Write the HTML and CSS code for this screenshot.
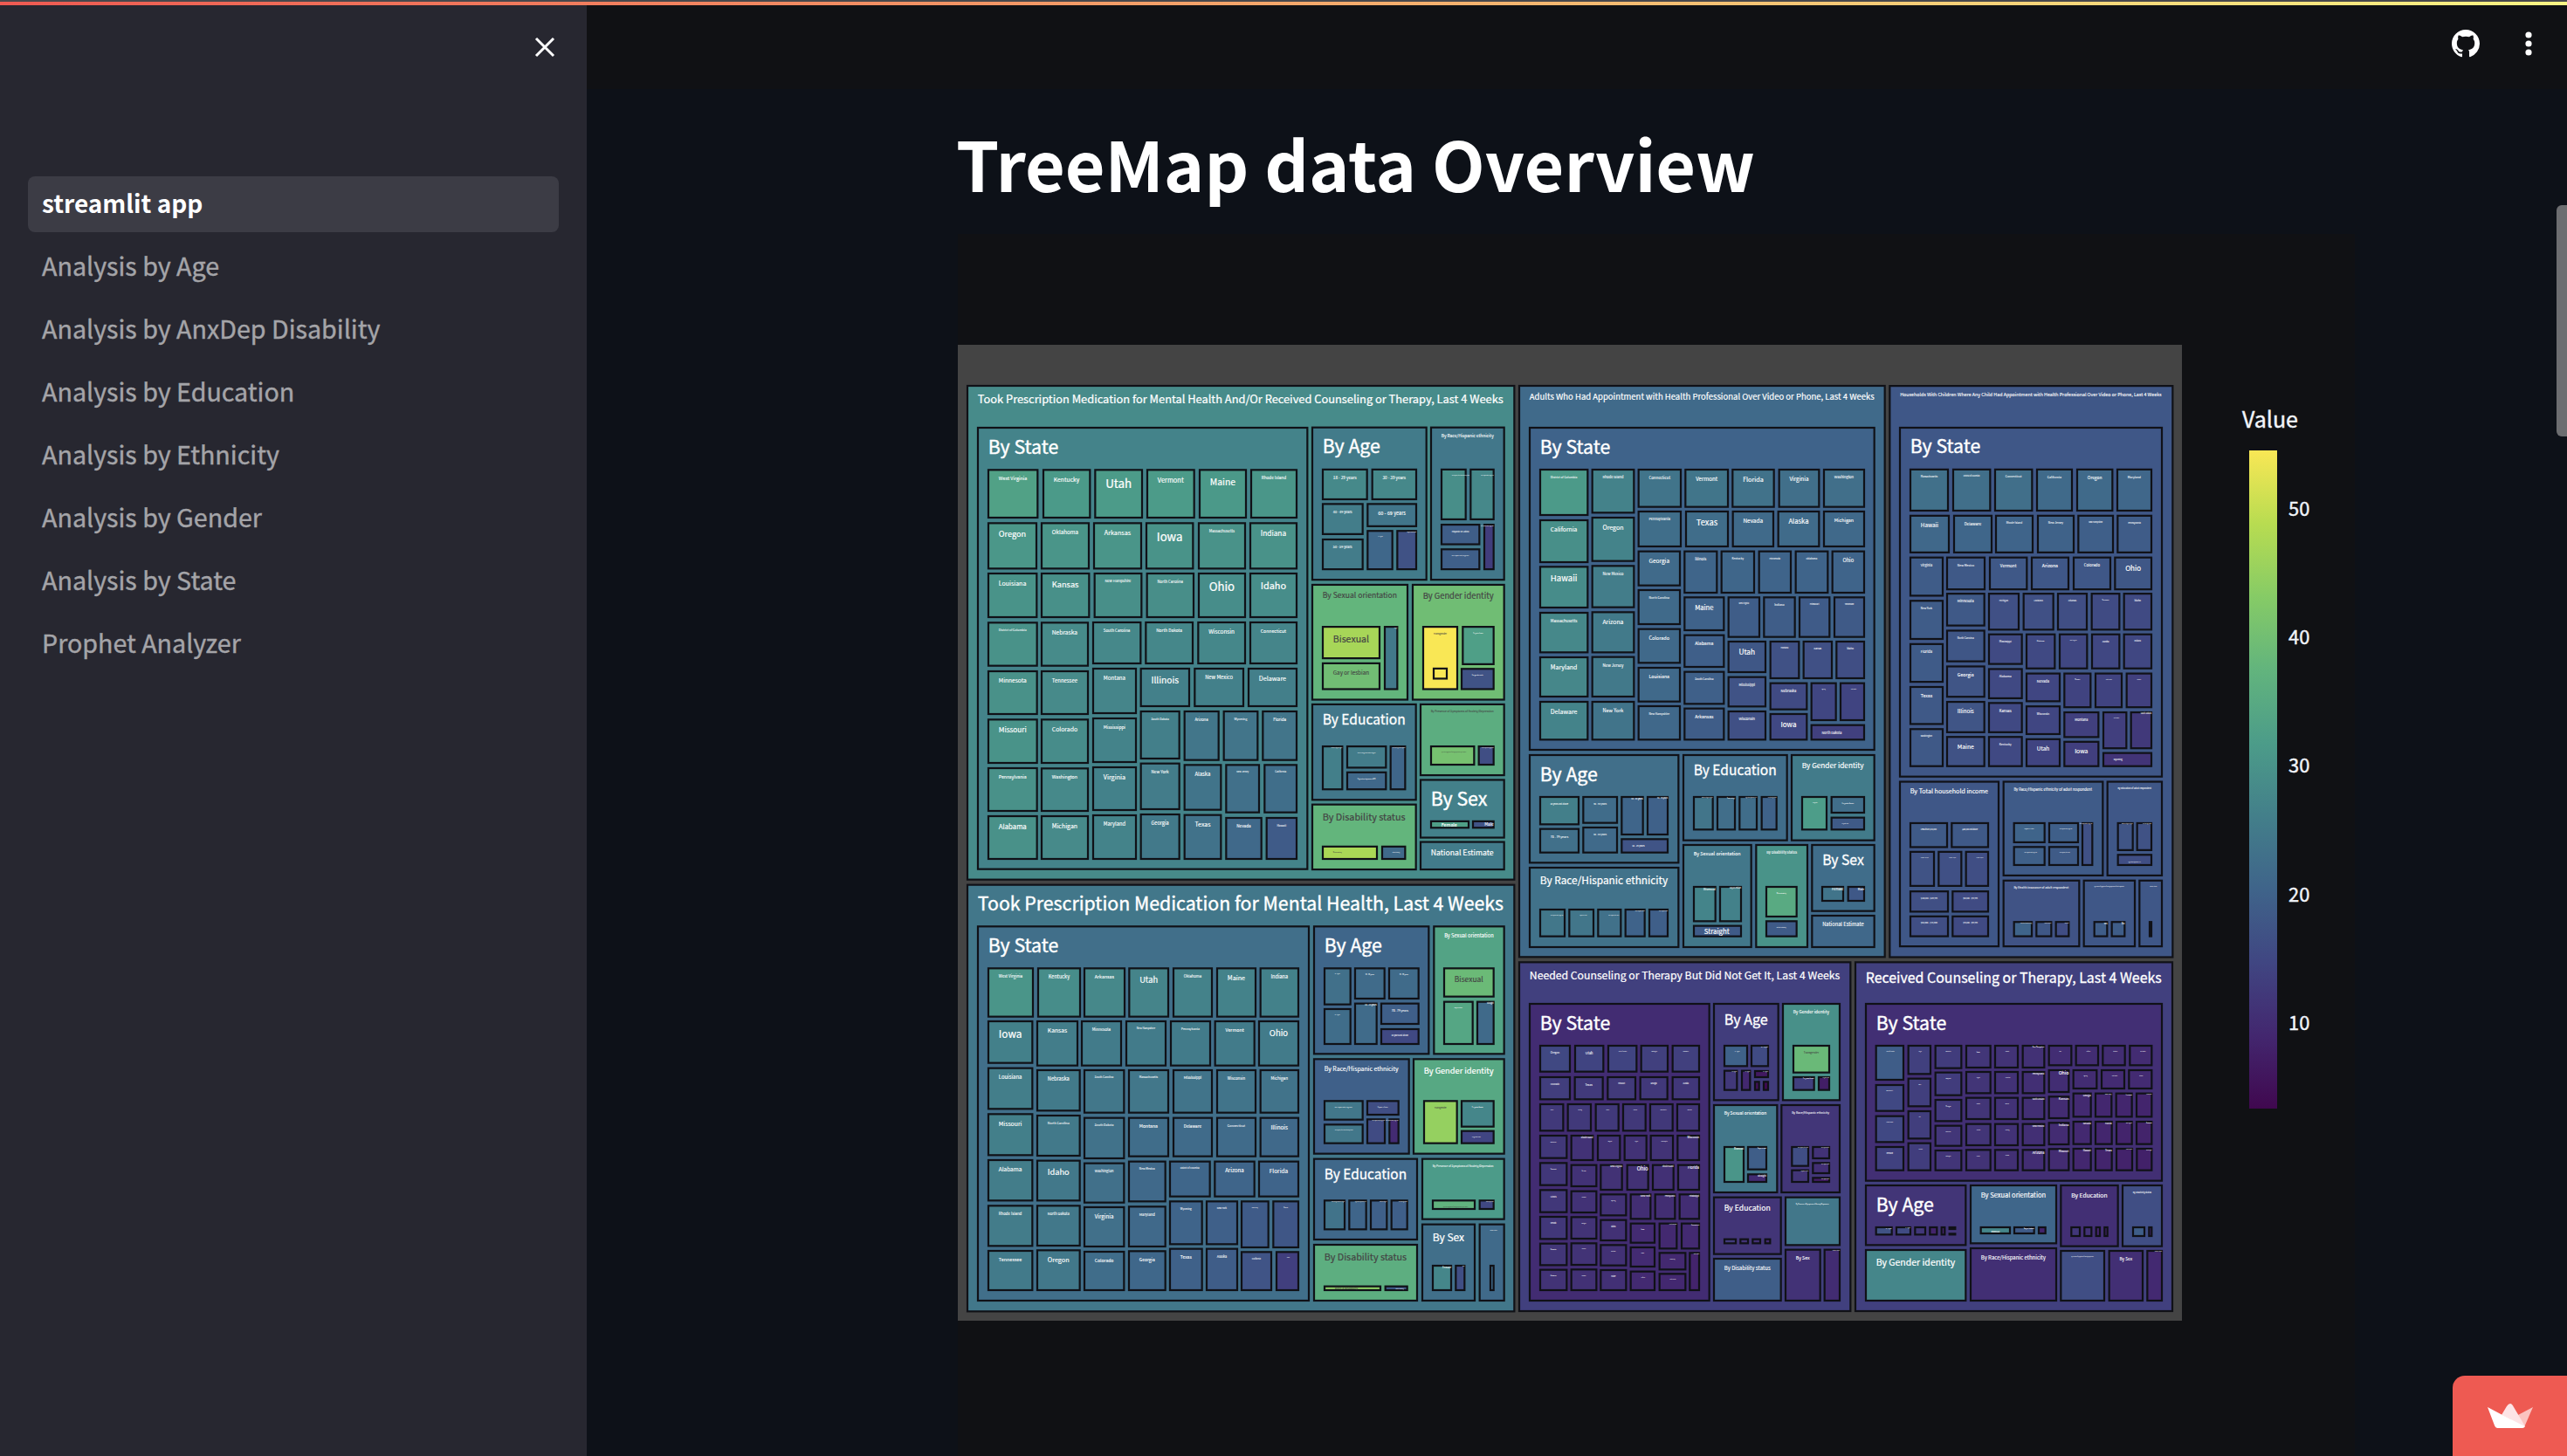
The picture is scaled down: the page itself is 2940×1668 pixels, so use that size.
FILE: index.html
```html
<!DOCTYPE html>
<html lang="en">
<head>
<meta charset="utf-8">
<title>streamlit app</title>
<link rel="stylesheet" href="styles.css">
</head>
<body>
<div class="decoration"></div>
<div class="app">
  <aside class="sidebar">
    <button class="close" aria-label="Close sidebar">
      <svg viewBox="0 0 24 24" width="24" height="24"><path d="M2 2 22 22M22 2 2 22" fill="none" stroke="#fff" stroke-width="3"/></svg>
    </button>
    <nav class="nav">
      <a class="nav-item active">streamlit app</a>
      <a class="nav-item">Analysis by Age</a>
      <a class="nav-item">Analysis by AnxDep Disability</a>
      <a class="nav-item">Analysis by Education</a>
      <a class="nav-item">Analysis by Ethnicity</a>
      <a class="nav-item">Analysis by Gender</a>
      <a class="nav-item">Analysis by State</a>
      <a class="nav-item">Prophet Analyzer</a>
    </nav>
  </aside>
  <main class="main">
    <header class="toolbar">
      <svg class="github" viewBox="0 0 16 16" width="32" height="32"><path fill="#fff" d="M8 0C3.58 0 0 3.58 0 8c0 3.54 2.29 6.53 5.47 7.59.4.07.55-.17.55-.38 0-.19-.01-.82-.01-1.49-2.01.37-2.53-.49-2.69-.94-.09-.23-.48-.94-.82-1.13-.28-.15-.68-.52-.01-.53.63-.01 1.08.58 1.23.82.72 1.21 1.87.87 2.33.66.07-.52.28-.87.51-1.07-1.78-.2-3.64-.89-3.64-3.95 0-.87.31-1.59.82-2.15-.08-.2-.36-1.02.08-2.12 0 0 .67-.21 2.2.82.64-.18 1.32-.27 2-.27s1.36.09 2 .27c1.53-1.04 2.2-.82 2.2-.82.44 1.1.16 1.92.08 2.12.51.56.82 1.27.82 2.15 0 3.07-1.87 3.75-3.65 3.95.29.25.54.73.54 1.48 0 1.07-.01 1.93-.01 2.2 0 .21.15.46.55.38A8.01 8.01 0 0 0 16 8c0-4.42-3.58-8-8-8z"/></svg>
      <svg class="kebab" viewBox="0 0 8 28" width="8" height="28"><g fill="#fff"><circle cx="4" cy="4" r="3.6"/><circle cx="4" cy="14" r="3.6"/><circle cx="4" cy="24" r="3.6"/></g></svg>
    </header>
    <section class="block">
      <h1 class="title">TreeMap data Overview</h1>
      <svg class="chart" id="chart" viewBox="1097 268 1600 1400" width="1600" height="1400"></svg>
    </section>
  </main>
</div>
<div class="scrollbar"></div>
<a class="badge" aria-label="Hosted with Streamlit">
  <svg viewBox="0 0 52 28" width="52" height="28">
    <path fill="#fbc3c0" d="M35 13 52 4 42 27 26 19Z"/>
    <path fill="#fde4e6" d="M26 0 Q28 0 30 4L43 26 16 13 22 3Q24 0 26 0Z"/>
    <path fill="#fff" d="M0 4 17 13 43 26 Q42 28 40 28H11Q9 28 8 25Z"/>
  </svg>
</a>
<script src="treemap.js"></script>
</body>
</html>
```
FILE: styles.css
```css
* { box-sizing: border-box; }
body {
  margin: 0;
  height: 1668px;
  overflow: hidden;
  background: #0d1118;
  color: #fafafa;
  font-family: "Noto Sans CJK SC", "Noto Sans", sans-serif;
}
.decoration {
  position: absolute;
  inset: 0 0 auto 0;
  height: 6px;
  z-index: 5;
  border-top: 2px solid #48484c;
  background: linear-gradient(90deg, #ee5a52, #fbf584) padding-box;
}
.app { display: flex; height: 1668px; }
.sidebar {
  width: 672px;
  background: #272730;
  padding: 0 32px;
  display: flex;
  flex-direction: column;
}
.close {
  align-self: flex-end;
  margin: 42px 4px 136px 0;
  width: 24px;
  height: 24px;
  padding: 0;
  border: 0;
  background: none;
}
.close svg { display: block; }
.nav { display: flex; flex-direction: column; gap: 8px; }
.nav-item {
  height: 64px;
  padding: 0 16px;
  line-height: 60px;
  font-size: 28.65px;
  color: #a4a4a8;
  -webkit-text-stroke: 0.4px #a4a4a8;
  border-radius: 8px;
  white-space: nowrap;
}
.nav-item.active {
  background: #3c3c45;
  color: #fff;
  font-size: 28px;
  font-weight: 700;
  -webkit-text-stroke: 0;
}
.main { flex: 1; overflow: hidden; }
.toolbar {
  height: 102px;
  padding: 0 40px 2px 0;
  display: flex;
  justify-content: flex-end;
  align-items: center;
  gap: 52px;
  background: #101114;
}
.block { padding-left: 425px; }
.title {
  margin: 0 0 0 -2px;
  height: 166px;
  line-height: 168px;
  font-size: 78.9px;
  font-weight: 700;
  color: #fff;
  white-space: nowrap;
}
.chart { display: block; background: #101114; }
.scrollbar {
  position: absolute;
  right: 0;
  top: 235px;
  width: 12px;
  height: 265px;
  border-radius: 6px 0 0 6px;
  background: #6c6d70;
}
.badge {
  position: absolute;
  right: 0;
  bottom: 0;
  width: 131px;
  height: 92px;
  border-radius: 14px 0 0 0;
  background: #ee5a52;
  display: flex;
  align-items: center;
  justify-content: center;
}
```
FILE: treemap.js
```js
// Layout of the treemap, one directive per line:
//   o originX originY scaleX scaleY      local coordinate system
//   p x0 y0 x1 y1 t label                branch, t = position on the colour scale
//   k value                              value of the next leaf; the others follow by area
//   r y0 y1: x0 x1 label; ...            a row of leaves
//   c x0 x1: y0 y1 label; ...            a column of leaves
//   l x0 y0 x1 y1 t label                single leaf with its own colour
const layout = `
o 1090 390 3 3
p 51 153 1936 1856 .49 Took Prescription Medication for Mental Health And/Or Received Counseling or Therapy, Last 4 Weeks
p 87 297 1225 1820 .46 By State
k 33
r 442 612: 123 298 West Virginia; 312 478 Kentucky; 490 657 Utah; 669 836 Vermont; 849 1014 Maine; 1026 1188 Rhode Island
r 625 787: 123 294 Oregon; 306 474 Oklahoma; 486 654 Arkansas; 666 832 Iowa; 846 1011 Massachusetts; 1023 1188 Indiana
r 798 954: 123 295 Louisiana; 306 475 Kansas; 488 655 New Hampshire; 668 834 North Carolina; 846 1011 Ohio; 1023 1188 Idaho
c 123 296: 967 1121 District of Columbia; 1134 1287 Minnesota; 1300 1455 Missouri; 1467 1620 Pennsylvania; 1632 1785 Alabama
c 306 471: 967 1121 Nebraska; 1134 1287 Tennessee; 1300 1455 Colorado; 1468 1620 Washington; 1632 1785 Michigan
r 966 1113: 483 652 South Carolina; 664 831 North Dakota; 844 1011 Wisconsin; 1023 1188 Connecticut
c 483 636: 1125 1284 Montana; 1296 1452 Mississippi; 1464 1617 Virginia; 1629 1785 Maryland
r 1125 1260: 647 819 Illinois; 832 1005 New Mexico; 1017 1188 Delaware
c 647 785: 1272 1440 South Dakota; 1451 1614 New York; 1626 1785 Georgia
r 1272 1445: 797 920 Arizona; 932 1054 Wyoming; 1066 1188 Florida
c 797 928: 1456 1616 Alaska; 1628 1785 Texas
r 1456 1625: 940 1059 New Jersey; 1072 1188 California
r 1638 1785: 940 1067 Nevada; 1079 1188 Hawaii
o 1490 430 3 2.6576
p 36 156 434 625 .43 By Age
k 28
r 284 380: 72 230 18 - 29 years; 242 399 30 - 39 years
c 72 215: 389 486 40 - 49 years; 497 593 50 - 59 years
r 389 462: 226 399 60 - 69 years
r 471 593: 226 317 70 - 79 years; 328 399 80 years and above
p 444 156 701 625 .41 By Race/Hispanic ethnicity
k 29
r 284 441: 480 569 Non-Hispanic, other races and multiple races; 580 665 Non-Hispanic White, single race
c 480 616: 452 517 Hispanic or Latino; 527 593 Non-Hispanic Black, single race
r 452 593: 627 665 Non-Hispanic Asian, single race
p 36 635 369 990 .67 By Sexual orientation
k 47
r 763 864: 72 273 Bisexual
r 874 958: 72 273 Gay or lesbian
r 763 958: 285 334 Straight
p 381 635 701 990 .71 By Gender identity
l 417 763 540 958 1 Transgender
l 553 763 665 882 .57 Cis-gender female
l 549 891 665 958 .27 Cis-gender male
l 453 890 504 926 1 Cis-gender
p 36 999 398 1295 .41 By Education
k 26
r 1127 1263: 72 145 Bachelor's degree or higher; 305 361 Less than a high school diploma
c 156 295: 1127 1197 Some college/Associate's degree; 1206 1263 High school diploma or GED
p 408 999 701 1220 .635 By Presence of Symptoms of Anxiety/Depression
l 444 1127 598 1188 .73 Experienced symptoms of anxiety/depression in past 4 weeks
l 608 1127 665 1188 .25 Did not experience symptoms
p 36 1304 398 1507 .67 By Disability status
l 72 1432 264 1475 .86 With disability
l 276 1432 361 1475 .36 Without disability
p 408 1229 701 1410 .45 By Sex
l 444 1355 579 1380 .57 Female
l 588 1355 665 1380 .27 Male
p 408 1418 701 1507 .43 National Estimate

o 1090 1005 3 3
p 51 23 1936 1495 .41 Took Prescription Medication for Mental Health, Last 4 Weeks
p 87 166 1230 1458 .38 By State
k 30.5
r 310 482: 123 282 West Virginia; 294 444 Kentucky; 453 597 Arkansas; 607 747 Utah; 759 897 Oklahoma; 909 1047 Maine; 1058 1194 Indiana
c 123 280: 492 641 Iowa; 653 799 Louisiana; 811 958 Missouri; 969 1114 Alabama; 1126 1270 Rhode Island; 1281 1422 Tennessee
r 492 650: 291 435 Kansas; 444 585 Minnesota; 597 738 New Hampshire; 750 891 Pennsylvania; 902 1043 Vermont; 1053 1194 Ohio
c 291 443: 660 805 Nebraska; 816 960 North Carolina; 971 1114 Idaho; 1126 1269 North Dakota; 1279 1422 Oregon
r 660 812: 453 595 South Carolina; 606 747 Massachusetts; 759 897 Mississippi; 909 1047 Wisconsin; 1058 1194 Michigan
c 453 595: 824 969 South Dakota; 980 1121 Washington; 1131 1272 Virginia; 1284 1422 Colorado
r 824 962: 606 747 Montana; 759 897 Delaware; 909 1047 Connecticut; 1058 1194 Illinois
c 606 737: 974 1117 New Mexico; 1129 1272 Maryland; 1282 1422 Georgia
r 974 1100: 747 890 District of Columbia; 901 1043 Arizona; 1053 1194 Florida
c 747 863: 1111 1264 Wyoming; 1274 1422 Texas
c 873 984: 1111 1264 New York; 1274 1422 Alaska
r 1111 1275: 993 1091 New Jersey; 1102 1194 Nevada
r 1285 1422: 993 1101 California; 1113 1194 Hawaii
o 1490 1005 3 3
p 42 166 442 610 .34 By Age
k 23
c 78 173: 310 440 50 - 59 years; 450 576 60 - 69 years
r 310 420: 183 290 40 - 49 years; 300 407 30 - 39 years
r 431 576: 183 263 18 - 29 years
c 273 407: 431 507 70 - 79 years; 519 576 80 years and above
p 454 166 701 610 .59 By Sexual orientation
k 39
r 310 413: 489 665 Bisexual
r 425 576: 489 593 Gay or lesbian; 603 665 Straight
p 42 622 374 953 .32 By Race/Hispanic ethnicity
k 24.5
c 78 215: 766 836 Non-Hispanic White, single race; 847 917 Non-Hispanic, other races and multiple races
r 766 819: 225 338 Hispanic or Latino
r 829 917: 225 291 Non-Hispanic Black, single race; 301 338 Non-Hispanic Asian, single race
p 384 622 701 953 .61 By Gender identity
l 420 766 539 917 .81 Transgender
l 549 766 665 860 .47 Cis-gender female
l 549 869 665 917 .22 Cis-gender male
p 42 965 402 1248 .35 By Education
k 23.5
r 1108 1213: 78 153 Some college/Associate's degree; 163 227 High school diploma or GED; 237 298 Bachelor's degree; 308 368 Less than high school
p 414 965 701 1178 .55 By Presence of Symptoms of Anxiety/Depression
l 450 1108 600 1143 .66 Experienced symptoms of anxiety/depression in past 4 weeks
l 611 1108 665 1143 .23 Did not experience
p 42 1260 402 1458 .64 By Disability status
l 78 1403 276 1422 .79 With a disability
l 287 1403 368 1422 .3 Without a disability
p 414 1190 600 1458 .38 By Sex
l 450 1332 519 1422 .47 Female
l 529 1332 565 1422 .25 Male
p 611 1190 701 1458 .36 National Estimate
l 648 1332 665 1422 .36 

o 1735 430 3 3
p 12 33 1274 2002 .36 Adults Who Had Appointment with Health Professional Over Video or Phone, Last 4 Weeks
p 48 177 1238 1290 .33 By State
k 31.5
c 84 253: 321 483 District of Columbia; 495 645 California; 655 801 Hawaii; 813 955 Massachusetts; 966 1107 Maryland; 1119 1255 Delaware
c 263 412: 321 475 Rhode Island; 486 641 Oregon; 652 800 New Mexico; 811 955 Arizona; 965 1107 New Jersey; 1119 1255 New York
r 321 455: 422 573 Connecticut; 583 735 Vermont; 745 893 Florida; 905 1048 Virginia; 1059 1203 Washington
r 465 591: 422 573 Pennsylvania; 585 735 Texas; 746 891 Nevada; 902 1048 Alaska; 1059 1203 Michigan
c 422 570: 602 725 Georgia; 735 858 North Carolina; 869 991 Colorado; 1002 1124 Louisiana; 1134 1255 New Hampshire
r 602 750: 580 697 Illinois; 707 825 Kentucky; 836 951 Minnesota; 962 1078 Oklahoma; 1088 1203 Ohio
c 580 721: 760 879 Maine; 890 1005 Alabama; 1016 1132 South Carolina; 1142 1255 Arkansas
r 760 902: 731 843 West Virginia; 853 965 Indiana; 975 1084 Missouri; 1095 1203 Tennessee
c 731 864: 912 1023 Utah; 1034 1141 Mississippi; 1152 1255 Wisconsin
r 912 1044: 875 979 Montana; 989 1092 Kansas; 1102 1203 Idaho
c 875 1006: 1055 1151 Nebraska; 1161 1255 Iowa
r 1055 1188: 1016 1106 Wyoming; 1116 1203 South Dakota
r 1199 1255: 1016 1203 North Dakota
o 1735 850 3 3
p 48 42 565 418 .38 By Age
k 26
c 84 222: 186 286 80 years and above; 296 383 70 - 79 years
c 232 354: 186 281 60 - 69 years; 291 383 50 - 59 years
r 186 321: 364 443 40 - 49 years; 453 528 30 - 39 years
r 331 383: 364 528 18 - 29 years
p 48 429 565 708 .39 By Race/Hispanic ethnicity
k 24.5
r 573 671: 84 174 Non-Hispanic Black, single race; 184 273 Hispanic or Latino; 283 367 Non-Hispanic, other races; 377 449 Non-Hispanic White; 459 528 Non-Hispanic Asian
p 576 42 938 341 .37 By Education
k 24
r 186 304: 612 683 Bachelor's degree or higher; 693 759 Some college; 769 834 High school diploma or GED; 845 902 Less than high school
p 948 42 1238 341 .43 By Gender identity
k 32
r 186 304: 984 1074 Transgender
c 1085 1203: 186 246 Cis-gender female; 257 304 Cis-gender male
p 576 351 815 708 .41 By Sexual orientation
k 27
r 495 619: 612 692 Bisexual; 702 780 Gay or lesbian
l 612 629 780 671 .3 Straight
p 826 351 1008 708 .52 By Disability status
l 861 495 971 603 .62 With a disability
l 861 613 971 671 .3 Without a disability
p 1018 351 1238 584 .37 By Sex
l 1053 495 1131 549 .4 Female
l 1142 495 1203 549 .29 Male
p 1018 594 1238 708 .35 National Estimate

o 2150 430 3 2.34
p 40 26 1018 1562 .285 Households With Children Where Any Child Had Appointment with Health Professional Over Video or Phone, Last 4 Weeks
p 75 138 981 1078 .285 By State
k 23
r 250 365: 111 246 Massachusetts; 258 391 District of Columbia; 402 535 Connecticut; 546 672 California; 684 811 Oregon; 822 945 Maryland
r 374 477: 111 249 Hawaii; 261 396 Delaware; 405 537 Rhode Island; 549 678 New Jersey; 688 813 New Hampshire; 823 945 Pennsylvania
c 111 228: 486 593 Virginia; 602 709 New York; 718 824 Florida; 833 937 Texas; 946 1050 Washington
r 486 576: 237 372 New Mexico; 384 517 Vermont; 528 660 Arizona; 672 804 Colorado; 814 945 Ohio
c 237 371: 583 673 Minnesota; 682 769 North Carolina; 778 864 Georgia; 873 959 Illinois; 967 1050 Maine
r 583 684: 381 489 Michigan; 500 608 Louisiana; 618 723 Arkansas; 734 835 Tennessee; 845 945 Idaho
c 381 500: 692 776 Mississippi; 785 868 Alabama; 876 959 Kansas; 967 1050 Kentucky
r 692 788: 510 613 Oklahoma; 624 724 West Virginia; 735 835 Alaska; 845 945 Indiana
c 510 630: 797 876 Nevada; 885 964 Wisconsin; 973 1050 Utah
r 797 892: 640 736 Missouri; 747 843 South Carolina; 854 945 Nebraska
c 640 763: 901 972 Montana; 980 1050 Iowa
r 901 1002: 774 859 North Dakota; 869 945 South Dakota
r 1010 1050: 774 945 Wyoming
p 75 1087 420 1533 .285 By Total household income
k 18.5
r 1198 1267: 111 243 Less than $25,000; 253 384 $200,000 and above
r 1275 1371: 111 198 $150,000 - $199,999; 208 292 $25,000 - $34,999; 302 384 $35,000 - $49,999
r 1381 1440: 111 246 $100,000 - $149,999; 256 384 $50,000 - $74,999
r 1448 1506: 111 246 $50,000 - $74,999; 256 384 $75,000 - $99,999
p 431 1087 778 1343 .3 By Race/Hispanic ethnicity of adult respondent
k 20.5
c 467 578: 1198 1254 Hispanic or Latino; 1262 1315 Non-Hispanic Black, single race
c 588 693: 1198 1254 Non-Hispanic Asian, single race; 1262 1315 Non-Hispanic, other races
r 1198 1315: 702 742 Non-Hispanic White, single race
p 788 1087 981 1343 .285 By Education of adult respondent
k 17.5
r 1198 1275: 824 881 Bachelor's degree or higher; 890 945 Less than high school
l 824 1283 945 1315 .25 High school diploma or GED
p 431 1352 697 1533 .27 By Health insurance of adult respondent
k 20.5
r 1463 1506: 467 534 Public health insurance only; 544 601 Private insurance; 611 661 Uninsured
p 707 1352 888 1533 .285 By Presence of Symptoms of Anxiety/Depression of adult respondent
k 19
r 1463 1506: 743 793 Yes; 803 853 No
p 898 1352 981 1533 .285 National Estimate
l 933 1463 945 1506 .28 

o 1735 1090 3 3
p 12 34 1156 1239 .2 Needed Counseling or Therapy But Did Not Get It, Last 4 Weeks
p 48 177 671 1203 .13 By State
k 15
r 321 416: 84 192 Oregon; 204 307 Utah; 318 421 District of Columbia; 431 528 Washington; 539 636 New Mexico
r 429 511: 84 192 Colorado; 203 305 Texas; 316 417 Missouri; 428 527 Georgia; 539 636 Alaska
r 522 619: 84 169 Kansas; 179 264 Kentucky; 275 359 Indiana; 369 452 Arkansas; 462 545 Massachusetts; 555 636 Minnesota
c 84 181: 630 713 Oklahoma; 724 806 Vermont; 817 899 Illinois; 909 991 Nevada; 1001 1081 Nebraska; 1091 1167 Alabama
r 630 720: 191 271 Rhode Island; 282 364 Maryland; 374 455 Virginia; 464 546 New Hampshire; 556 636 Wisconsin
c 191 283: 731 810 Arizona; 821 900 Louisiana; 910 990 Michigan; 1000 1080 Tennessee; 1090 1167 Delaware
r 731 822: 292 371 West Virginia; 383 461 Ohio; 471 548 Rhode Island; 558 636 Florida
c 292 385: 832 910 Wyoming; 920 996 Idaho; 1006 1082 Montana; 1092 1167 Maine
r 832 922: 395 469 New York; 479 553 Pennsylvania; 563 636 Mississippi
c 395 483: 932 1004 Iowa; 1014 1086 Hawaii; 1097 1167 California
r 932 1024: 494 559 North Carolina; 570 636 Connecticut
c 494 589: 1033 1096 New Jersey; 1105 1167 South Carolina
r 1033 1167: 598 636 South Dakota
p 681 177 908 514 .19 By Age
k 20
r 321 397: 717 801 18 - 29 years; 810 873 30 - 39 years
r 407 479: 717 766 40 - 49 years; 777 811 50 - 59 years
l 822 408 873 435 .06 60 - 69 years
l 822 445 842 479 .03 
l 852 445 873 479 .01 
p 918 177 1119 514 .51 By Gender identity
l 954 321 1083 419 .69 Transgender
l 954 429 1031 479 .2 Cis-gender female
l 1041 429 1083 479 .08 Cis-gender male
p 681 525 904 831 .41 By Sexual orientation
l 717 669 789 795 .53 Bisexual
l 798 669 867 752 .31 Gay or lesbian
l 798 763 867 795 .13 Straight
p 913 525 1119 831 .165 By Race/Hispanic ethnicity
l 949 669 1011 740 .25 Non-Hispanic, other races
l 949 749 1011 795 .16 Hispanic or Latino
l 1021 669 1083 714 .15 Non-Hispanic White
l 1021 724 1083 765 .14 Non-Hispanic Black
l 1021 775 1083 795 .07 Non-Hispanic Asian
p 681 842 917 1043 .16 By Education
l 717 986 762 1006 .18 
l 772 986 804 1006 .15 
l 814 986 846 1006 .14 
l 857 986 880 1006 .12 
p 681 1053 917 1203 .31 By Disability status
p 927 842 1119 1012 .41 By Presence of Symptoms of Anxiety/Depression
p 927 1022 1052 1203 .15 By Sex
p 1061 1022 1119 1203 .13 National Estimate

o 2110 1090 3 3
p 42 34 1137 1239 .2 Received Counseling or Therapy, Last 4 Weeks
p 78 177 1101 791 .14 By State
k 19
c 113 213: 321 444 District of Columbia; 456 551 Massachusetts; 563 658 Rhode Island; 669 755 Vermont
c 224 306: 321 424 Oregon; 434 535 Maine; 546 646 Utah; 656 755 Colorado
c 317 412: 321 404 Minnesota; 413 497 Maryland; 507 586 Michigan; 596 671 Wisconsin; 681 755 Washington
c 423 512: 321 402 Idaho; 411 490 Virginia; 500 579 Alaska; 590 669 Nebraska; 679 755 Illinois
c 522 606: 321 402 New York; 411 490 Connecticut; 500 579 Montana; 590 669 Kentucky; 679 755 Delaware
c 617 697: 321 402 New Hampshire; 411 490 Pennsylvania; 500 579 North Carolina; 590 669 New Mexico; 679 755 Arizona
r 321 394: 707 790 Iowa; 800 882 California; 892 974 Oklahoma; 985 1066 North Dakota
c 707 781: 405 486 Ohio; 496 576 Kansas; 586 666 Indiana; 676 755 Missouri
r 405 474: 791 877 Wyoming; 888 972 South Dakota; 982 1066 Arkansas
r 485 571: 791 857 Georgia; 867 928 New Jersey; 938 998 Louisiana; 1008 1066 Tennessee
r 582 665: 791 857 Nevada; 867 929 Florida; 939 998 West Virginia; 1008 1066 Alabama
r 675 755: 791 857 Hawaii; 867 929 Texas; 939 999 South Carolina; 1009 1066 Mississippi
p 78 801 427 1012 .16 By Age
l 113 945 173 976 .27 18 - 29 years
l 183 945 237 976 .24 30 - 39 years
l 247 945 288 976 .17 
l 298 945 328 976 .1 
l 338 945 355 976 .1 
l 365 945 391 957 .05 
l 365 967 391 976 .05 
p 438 801 738 1006 .34 By Sexual orientation
l 473 945 579 972 .47 Bisexual
l 588 945 662 972 .3 Gay or lesbian
l 672 945 701 972 .1 
p 748 801 950 1016 .14 By Education
l 784 945 819 981 .17 
l 829 945 859 981 .15 
l 869 945 888 981 .1 
l 898 945 914 981 .1 
p 960 801 1101 1016 .25 By Disability status
l 996 945 1041 981 .31 
l 1051 945 1066 981 .1 
p 78 1023 427 1203 .47 By Gender identity
p 438 1017 738 1203 .14 By Race/Hispanic ethnicity
p 748 1026 903 1203 .25 By Presence of Symptoms of Anxiety/Depression
p 914 1026 1035 1203 .14 By Sex
p 1045 1026 1101 1203 .12 National Estimate
`;

const scale = ["#40084f", "#43276f", "#404682", "#3f648a", "#437f8a", "#4c9c89", "#62b47d", "#86cb66", "#b8dc51", "#f9e755"];
const rgb = scale.map(h => [1, 3, 5].map(i => parseInt(h.slice(i, i + 2), 16)));
function colour(t) {
  const p = Math.max(0, Math.min(1, t)) * 9;
  const i = Math.min(8, Math.floor(p));
  return "rgb(" + rgb[i].map((a, n) => Math.round(a + (rgb[i + 1][n] - a) * (p - i))).join() + ")";
}

const NS = "http://www.w3.org/2000/svg";
const chart = document.getElementById("chart");
const FONT = '"Noto Sans CJK SC", "Noto Sans", sans-serif';
const pen = document.createElement("canvas").getContext("2d");
pen.font = "100px " + FONT;
const unitWidth = s => pen.measureText(s).width / 100;

function add(tag, attrs, text) {
  const el = document.createElementNS(NS, tag);
  for (const k in attrs) el.setAttribute(k, attrs[k]);
  if (text) el.textContent = text;
  chart.appendChild(el);
  return el;
}

const MAX = 80.5 / unitWidth("By State");
const LEAD = 24 / MAX;

function cell(x0, y0, x1, y1, t, label) {
  const w = x1 - x0, h = y1 - y0;
  add("rect", { x: x0 + 1, y: y0 + 1, width: w - 2, height: h - 2, fill: colour(t), stroke: "#101117", "stroke-width": 2.2 });
  if (!label) return;
  const unit = unitWidth(label);
  const fill = t > 0.63 ? "#444444" : "#ffffff";
  let size, x = x0 + 12.8, y, anchor = "start";
  if (w < 26.8) {
    // too narrow for padding: the label sits in the top right corner
    size = Math.max(1, Math.min((w - 13) / unit, h * 0.5));
    x = x1 - 1;
    y = y0 + 1.5 + size * 0.95;
    anchor = "end";
  } else if (h < 15) {
    size = Math.max(1, Math.min((w - 25.7) / unit, h * 0.56));
    y = y0 + h * 0.74;
  } else {
    size = Math.max(1, Math.min(MAX, (w - 25.7) / unit, (h - 14.5) / LEAD));
    y = y0 + 7 + size * LEAD * 0.98;
  }
  add("text", {
    x, y, fill, stroke: fill, "stroke-width": (size * 0.018).toFixed(3),
    "font-size": size.toFixed(3), "font-family": FONT, "text-anchor": anchor
  }, label);
}

add("rect", { x: 1097, y: 395, width: 1402, height: 1118, fill: "#444444" });

let ox, oy, sx, sy, value, perArea;
const X = v => ox + v / sx, Y = v => oy + v / sy;
function leaf(x0, y0, x1, y1, label) {
  const a = [X(x0), Y(y0), X(x1), Y(y1)];
  const area = (a[2] - a[0] + 4) * (a[3] - a[1] + 4);
  if (value) { perArea = value / area; value = 0; }
  cell(...a, (area * perArea - 3.3) / 51.3, label);
}
for (const line of layout.split("\n")) {
  const kind = line[0], body = line.slice(2);
  if (kind === "o") [ox, oy, sx, sy] = body.split(" ").map(Number);
  else if (kind === "k") value = +body;
  else if (kind === "p" || kind === "l") {
    const f = body.split(" "), n = f.slice(0, 5).map(Number);
    cell(X(n[0]), Y(n[1]), X(n[2]), Y(n[3]), n[4], f.slice(5).join(" "));
  } else if (kind === "r" || kind === "c") {
    const cut = body.indexOf(":");
    const [a0, a1] = body.slice(0, cut).split(" ").map(Number);
    for (const item of body.slice(cut + 1).split(";")) {
      const f = item.trim().split(" "), b0 = +f[0], b1 = +f[1], label = f.slice(2).join(" ");
      if (kind === "r") leaf(b0, a0, b1, a1, label);
      else leaf(a0, b0, a1, b1, label);
    }
  }
}

// Colour bar
const grad = add("linearGradient", { id: "bar", x1: 0, x2: 0, y1: 1, y2: 0 });
scale.forEach((c, i) => {
  const s = document.createElementNS(NS, "stop");
  s.setAttribute("offset", i / 9);
  s.setAttribute("stop-color", c);
  grad.appendChild(s);
});
add("rect", { x: 2576, y: 516, width: 32, height: 754, fill: "url(#bar)" });
add("text", { x: 2568, y: 490, fill: "#f2f5fa", stroke: "#f2f5fa", "stroke-width": 0.4, "font-size": 64 / unitWidth("Value"), "font-family": FONT }, "Value");
[[50, 591], [40, 738], [30, 885], [20, 1033], [10, 1180]].forEach(([n, y]) =>
  add("text", { x: 2621, y, fill: "#f2f5fa", stroke: "#f2f5fa", "stroke-width": 0.4, "font-size": 24.3 / unitWidth("50"), "font-family": FONT }, String(n)));
```
